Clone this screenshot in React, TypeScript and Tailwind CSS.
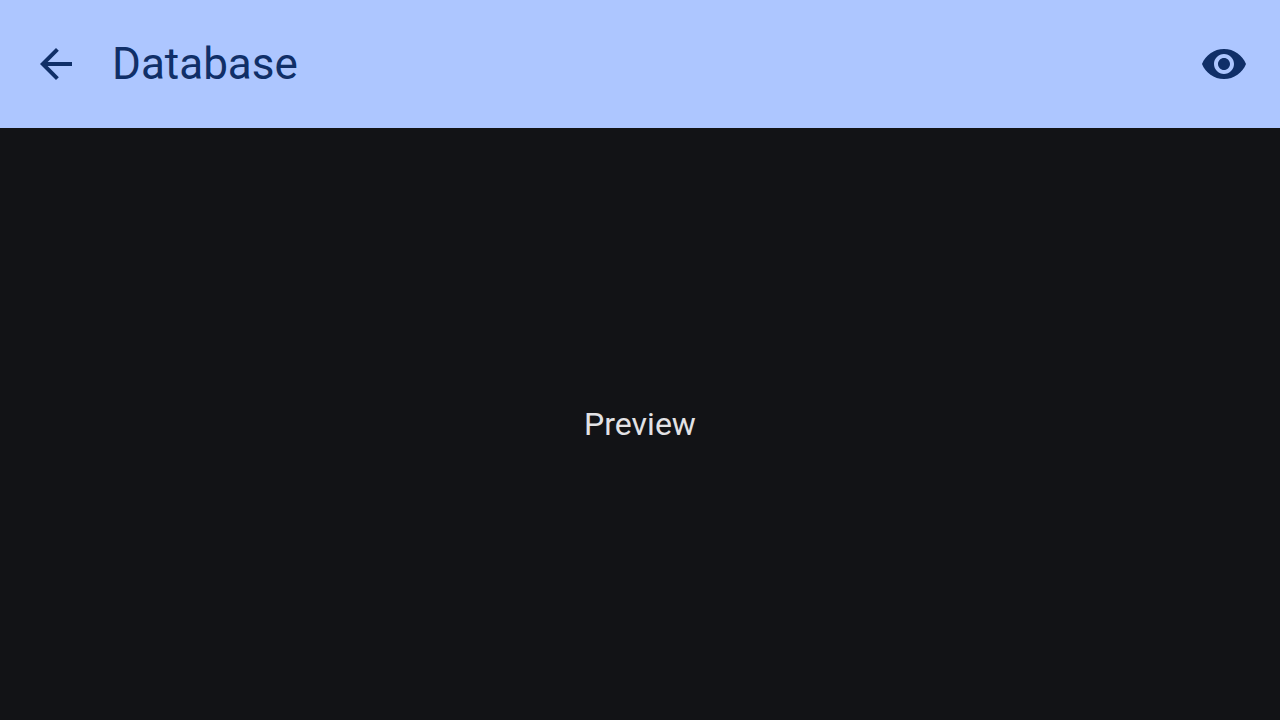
export default function App() {
  return (
    <div className="flex min-h-screen flex-col bg-[#121316] font-[Roboto,sans-serif]">
      <header className="flex h-32 items-center justify-between bg-[#adc6ff] px-8 text-[#102f68]">
        <div className="flex items-center gap-8">
          <button type="button" aria-label="Back" className="block">
            <svg viewBox="0 0 24 24" className="size-12" fill="currentColor" aria-hidden="true">
              <path d="M20 11H7.83l5.59-5.59L12 4l-8 8 8 8 1.41-1.41L7.83 13H20v-2z" />
            </svg>
          </button>
          <h1 className="text-[44px] leading-[56px]">Database</h1>
        </div>
        <button type="button" aria-label="Show preview" className="block">
          <svg viewBox="0 0 24 24" className="size-12" fill="currentColor" aria-hidden="true">
            <path d="M12 4.5C7 4.5 2.73 7.61 1 12c1.73 4.39 6 7.5 11 7.5s9.27-3.11 11-7.5c-1.73-4.39-6-7.5-11-7.5zM12 17c-2.76 0-5-2.24-5-5s2.24-5 5-5 5 2.24 5 5-2.24 5-5 5zm0-8c-1.66 0-3 1.34-3 3s1.34 3 3 3 3-1.34 3-3-1.34-3-3-3z" />
          </svg>
        </button>
      </header>
      <main className="flex flex-1 items-center justify-center">
        <p className="text-[32px] leading-[48px] text-[#e2e2e5]">Preview</p>
      </main>
    </div>
  );
}
